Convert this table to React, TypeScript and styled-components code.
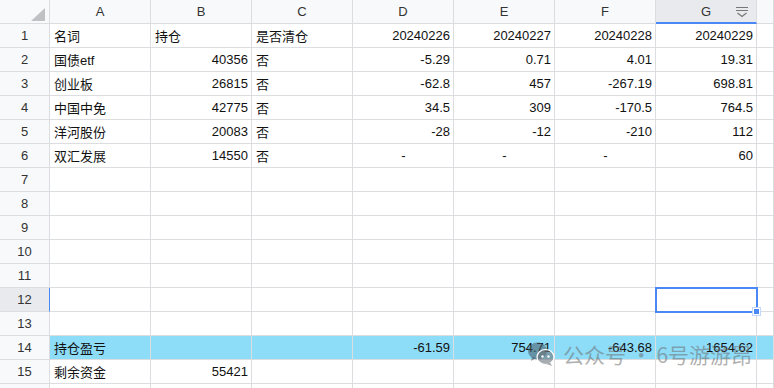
import styled, { createGlobalStyle } from "styled-components";

const GlobalStyle = createGlobalStyle`
  html, body {
    margin: 0;
    padding: 0;
    background: #ffffff;
    overflow: hidden;
  }
  body {
    font-family: "Liberation Sans", Arial, "Noto Sans CJK SC", sans-serif;
  }
`;

const COLS = ["A", "B", "C", "D", "E", "F", "G", ""];
const SELECTED_COL = 6;
const SELECTED_ROW = 12;
const TOTAL_ROW = 14;

type Align = "left" | "right" | "center";

const rows: string[][] = [
  ["名词", "持仓", "是否清仓", "20240226", "20240227", "20240228", "20240229"],
  ["国债etf", "40356", "否", "-5.29", "0.71", "4.01", "19.31"],
  ["创业板", "26815", "否", "-62.8", "457", "-267.19", "698.81"],
  ["中国中免", "42775", "否", "34.5", "309", "-170.5", "764.5"],
  ["洋河股份", "20083", "否", "-28", "-12", "-210", "112"],
  ["双汇发展", "14550", "否", "-", "-", "-", "60"],
  [],
  [],
  [],
  [],
  [],
  [],
  [],
  ["持仓盈亏", "", "", "-61.59", "754.71", "-643.68", "1654.62"],
  ["剩余资金", "55421"],
  [],
];

const alignOf = (v: string, col: number): Align => {
  if (v === "-") return "center";
  if (col === 0 || col === 2) return "left";
  if (/^-?[\d.]+$/.test(v)) return "right";
  return "left";
};

const Sheet = styled.div`
  display: grid;
  grid-template-columns: 50px repeat(7, 101px) 1fr;
  grid-auto-rows: 24px;
  width: 774px;
  height: 388px;
  overflow: hidden;
  position: relative;
  font-size: 13px;
  color: #111;
`;

const Corner = styled.div`
  background: #f8f9fa;
  border-right: 1px solid #dcdde0;
  border-bottom: 1px solid #dcdde0;
  box-sizing: border-box;
  display: flex;
  align-items: flex-end;
  justify-content: flex-end;
  padding: 0 4px 2px 0;

  &::after {
    content: "";
    width: 0;
    height: 0;
    border-left: 14px solid transparent;
    border-bottom: 13px solid #c0c1c4;
  }
`;

const ColHead = styled.div<{ $active?: boolean }>`
  position: relative;
  box-sizing: border-box;
  background: ${(p) => (p.$active ? "#e8eaed" : "#f8f9fa")};
  border-right: 1px solid #dcdde0;
  border-bottom: ${(p) => (p.$active ? "2px solid #4a89f5" : "1px solid #dcdde0")};
  display: flex;
  align-items: center;
  justify-content: center;
  color: #333;
  font-size: 13px;
  padding-top: ${(p) => (p.$active ? "1px" : "0")};
`;

const FilterIcon = styled.svg`
  position: absolute;
  right: 7px;
  top: 6px;
`;

const RowHead = styled.div<{ $active?: boolean }>`
  box-sizing: border-box;
  background: ${(p) => (p.$active ? "#e8eaed" : "#f8f9fa")};
  border-right: ${(p) => (p.$active ? "1px solid #4a89f5" : "1px solid #dcdde0")};
  border-bottom: 1px solid #dcdde0;
  display: flex;
  align-items: center;
  justify-content: center;
  color: #333;
  font-size: 13px;
`;

const Cell = styled.div<{ $align: Align; $total?: boolean; $selected?: boolean }>`
  position: relative;
  box-sizing: border-box;
  background: ${(p) => (p.$total ? "#8ddcf8" : "#ffffff")};
  border-right: 1px solid #dcdde0;
  border-bottom: 1px solid #dcdde0;
  display: flex;
  align-items: center;
  justify-content: ${(p) =>
    p.$align === "left" ? "flex-start" : p.$align === "right" ? "flex-end" : "center"};
  padding: 0 3px 0 4px;
  white-space: nowrap;
  overflow: visible;
  ${(p) =>
    p.$selected &&
    `
    outline: 2px solid #4a89f5;
    outline-offset: -1px;
    z-index: 2;
    &::after {
      content: "";
      position: absolute;
      right: -4px;
      bottom: -4px;
      width: 5px;
      height: 5px;
      background: #4a89f5;
      border: 1px solid #ffffff;
      box-shadow: 0 0 0 1px #c4d8fb;
    }
  `}
`;

const Watermark = styled.div`
  position: absolute;
  left: 527px;
  top: 339px;
  display: flex;
  align-items: center;
  gap: 8px;
  color: rgba(110, 110, 110, 0.55);
  font-size: 21px;
  font-family: "Noto Sans CJK SC", sans-serif;
  pointer-events: none;
  z-index: 5;
`;

const WeChat = () => (
  <svg width="28" height="26" viewBox="0 0 28 26">
    <ellipse cx="10.5" cy="10" rx="9.5" ry="8.5" fill="rgba(70,85,95,0.55)" />
    <path d="M5 16 L4 20 L9 17 Z" fill="rgba(70,85,95,0.55)" />
    <ellipse cx="18.5" cy="16" rx="8.5" ry="7.5" fill="rgba(110,118,125,0.6)" stroke="#ffffff" strokeWidth="1.2" />
    <path d="M23 21.5 L25 25 L19.5 23 Z" fill="rgba(110,118,125,0.6)" />
    <circle cx="15.5" cy="15.5" r="1.2" fill="#ffffff" />
    <circle cx="21.5" cy="15.5" r="1.2" fill="#ffffff" />
  </svg>
);

export default function App() {
  return (
    <>
      <GlobalStyle />
      <Sheet>
        <Corner />
        {COLS.map((c, i) => (
          <ColHead key={c + i} $active={i === SELECTED_COL}>
            {c}
            {i === SELECTED_COL && (
              <FilterIcon width="14" height="12" viewBox="0 0 14 12">
                <path d="M1 1.5 H13 M1 4.5 H13" stroke="#777" strokeWidth="1.2" fill="none" />
                <path d="M2.5 7 L7 10.5 L11.5 7" stroke="#777" strokeWidth="1.2" fill="none" />
              </FilterIcon>
            )}
          </ColHead>
        ))}
        {rows.map((r, ri) => {
          const n = ri + 1;
          return [
            <RowHead key={`h${n}`} $active={n === SELECTED_ROW}>
              {n <= 15 ? n : ""}
            </RowHead>,
            ...COLS.map((_, ci) => {
              const v = r[ci] ?? "";
              return (
                <Cell
                  key={`${n}-${ci}`}
                  $align={alignOf(v, ci)}
                  $total={n === TOTAL_ROW}
                  $selected={n === SELECTED_ROW && ci === SELECTED_COL}
                >
                  {v}
                </Cell>
              );
            }),
          ];
        })}
        <Watermark>
          <WeChat />
          <span>公众号 · 6号游游昂</span>
        </Watermark>
      </Sheet>
    </>
  );
}
